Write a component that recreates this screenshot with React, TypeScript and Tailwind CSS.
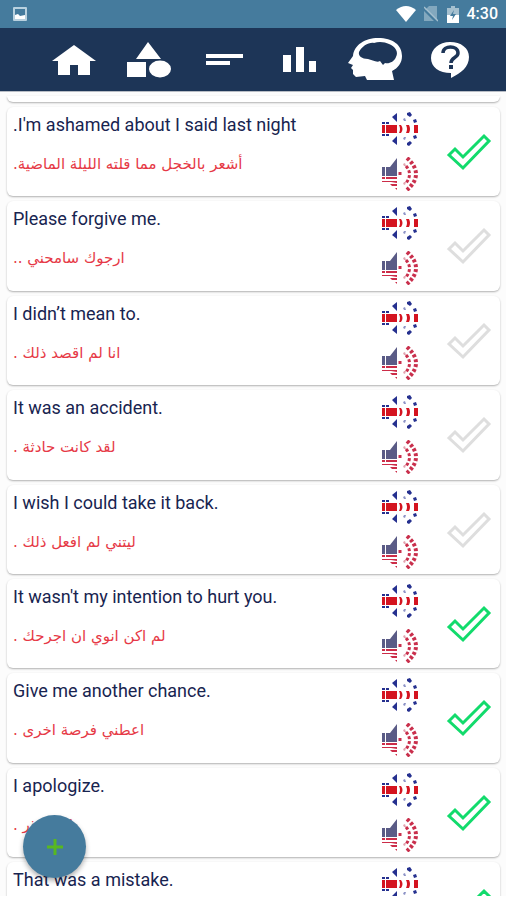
import React from "react";

type Phrase = { en: string; ar: string; done: boolean };

const phrases: Phrase[] = [
  { en: ".I'm ashamed about I said last night", ar: "أشعر بالخجل مما قلته الليلة الماضية.", done: true },
  { en: "Please forgive me.", ar: "ارجوك سامحني ..", done: false },
  { en: "I didn’t mean to.", ar: "انا لم اقصد ذلك .", done: false },
  { en: "It was an accident.", ar: "لقد كانت حادثة .", done: false },
  { en: "I wish I could take it back.", ar: "ليتني لم افعل ذلك .", done: false },
  { en: "It wasn't my intention to hurt you.", ar: "لم اكن انوي ان اجرحك .", done: true },
  { en: "Give me another chance.", ar: "اعطني فرصة اخرى .", done: true },
  { en: "I apologize.", ar: "انا اعتذر .", done: true },
];

function UkSpeaker() {
  return (
    <svg width="36" height="34" viewBox="0 0 36 34" aria-hidden="true">
      <path d="M0 13h3v8H0zM4 13h11v8H4zM17 13h2q3 4 0 8h-2q2-4 0-8zM24 13h3q2 4 0 8h-3q2-4 0-8zM32 13h4v8h-4z" fill="#d41420" />
      <path
        d="M0 10h3v2H0zM4 10h3v2H4zM0 22h3v2H0zM4 22h3v2H4zM10 5l5-4v9zM10 29l5 4v-9zM25 1l3-1 2 3-2 2-3-2zM31 8l3-1 1 3-3 1zM31 24l3-1 1 3-3 1zM25 31l3-2 2 2-3 3-2-1z"
        fill="#25308f"
      />
      <path d="M21 7l2-1 1 3h-2zM22 25h2l-1 3-2-1z" fill="#8d93c6" />
    </svg>
  );
}

function UsSpeaker() {
  return (
    <svg width="36" height="34" viewBox="0 0 36 34" aria-hidden="true">
      <path d="M0 10h3v9H0zM4 10h4l7-9v18H4z" fill="#5a5b86" />
      <path d="M0 20h3v2H0zM4 20h11v2H4zM0 24h15v2l-6-1H0zM8 27h7v2h-5zM13 31h2v2z" fill="#cc2c48" />
      <g fill="none" stroke="#c92f4c" strokeWidth="3" strokeDasharray="3 2">
        <path d="M25 1Q43 17 25 33" strokeWidth="4" />
        <path d="M24 9Q31 17 24 26" />
        <path d="M18 15v5" />
      </g>
      <path d="M21 7l2-1 1 3h-2zM22 25h2l-1 3-2-1z" fill="#e3a3b0" />
    </svg>
  );
}

function CheckIcon({ done }: { done: boolean }) {
  return (
    <svg width="46" height="40" viewBox="0 0 46 40" fill="none" aria-hidden="true">
      <path d="M3 23L9 17L17 25L38 4L43 9L17 36Z" stroke={done ? "#12db6c" : "#dedede"} strokeWidth="3" />
    </svg>
  );
}

function PhraseText({ en, ar }: { en: string; ar?: string }) {
  return (
    <div className="min-w-0 flex-1">
      <p className="text-lg leading-[26px] text-[#182450]">{en}</p>
      {ar && (
        <p dir="rtl" lang="ar" className="mt-3 w-fit text-[15px] leading-7 text-[#e63946] font-['DejaVu_Sans',sans-serif]">
          {ar}
        </p>
      )}
    </div>
  );
}

function PhraseCard({ phrase }: { phrase: Phrase }) {
  return (
    <li className="flex min-h-[94px] flex-1 pt-[5px]">
      <article className="flex flex-1 items-start rounded-md bg-white pt-[5px] pr-2 pl-[6px] shadow-[0_1px_2px_rgba(0,0,0,0.3)]">
        <PhraseText en={phrase.en} ar={phrase.ar} />
        <div className="flex flex-col gap-[11px]">
          <button type="button" aria-label="Play British pronunciation"><UkSpeaker /></button>
          <button type="button" aria-label="Play American pronunciation"><UsSpeaker /></button>
        </div>
        <button type="button" aria-label="Mark as learned" aria-pressed={phrase.done} className="mt-5 ml-7">
          <CheckIcon done={phrase.done} />
        </button>
      </article>
    </li>
  );
}

function StatusBar() {
  return (
    <div className="flex h-7 shrink-0 items-center bg-[#457b9d] pr-2 pl-3 text-white">
      <svg width="16" height="16" viewBox="0 0 16 16" aria-hidden="true">
        <path fillRule="evenodd" d="M2 1h12a1 1 0 011 1v12a1 1 0 01-1 1H2a1 1 0 01-1-1V2a1 1 0 011-1zM3 3v10h10V3z" fill="#b9d1df" />
        <path d="M3 9l3-1 2 2 5-1v4H3z" fill="white" />
      </svg>
      <div className="ml-auto flex items-center">
        <svg width="20" height="16" viewBox="0 0 20 16" aria-hidden="true">
          <path d="M0 4Q10-4 20 4L10 16z" fill="white" />
        </svg>
        <svg className="ml-2" width="14" height="16" viewBox="0 0 14 16" aria-hidden="true">
          <path d="M5 0h8v14L1 2V4L5 0zM0 5l10 10H0z" fill="#83a8be" />
          <path d="M0 1l14 14" stroke="#a5c0cf" strokeWidth="1.500" />
        </svg>
        <svg className="ml-[9px]" width="12" height="17" viewBox="0 0 12 17" aria-hidden="true">
          <path d="M4 0h4v2h4v7H0V2h4z" fill="#a5c0cf" />
          <path d="M0 9h12v8H0z" fill="white" />
          <path d="M7 4L3 10h3l-1 4 4-6H6z" fill="#457b9d" />
        </svg>
        <span className="ml-2 text-base leading-5 font-medium">4:30</span>
      </div>
    </div>
  );
}

function NavButton({ label, children }: { label: string; children: React.ReactNode }) {
  return (
    <button type="button" aria-label={label} className="flex h-full flex-1 items-center justify-center">
      {children}
    </button>
  );
}

function NavBar() {
  return (
    <nav className="flex h-[63px] shrink-0 items-center bg-[#1d3557] pr-[18px] pl-9">
      <NavButton label="Home">
        <svg width="44" height="30" viewBox="0 0 44 30" aria-hidden="true">
          <path d="M22 0L44 16H38V30H26V20H18V30H6V16H0z" fill="white" />
        </svg>
      </NavButton>
      <NavButton label="Categories">
        <svg width="44" height="36" viewBox="0 0 44 36" fill="white" aria-hidden="true">
          <path d="M21 0L34 17H9zM0 20h19v15H0z" />
          <ellipse cx="33" cy="27" rx="11" ry="8.500" />
        </svg>
      </NavButton>
      <NavButton label="Phrases">
        <svg width="37" height="12" viewBox="0 0 37 12" fill="white" aria-hidden="true">
          <path d="M0 0h37v4H0zM0 7h24v4H0z" />
        </svg>
      </NavButton>
      <NavButton label="Statistics">
        <svg width="33" height="26" viewBox="0 0 33 26" fill="white" aria-hidden="true">
          <path d="M0 8h8v17H0zM13 0h8v25h-8zM26 14h7v11h-7z" />
        </svg>
      </NavButton>
      <NavButton label="Train memory">
        <svg width="54" height="43" viewBox="0 0 54 43" aria-hidden="true">
          <path d="M5 18C6 7 17 0 30 0C45 0 54 7 54 18C54 25 50 30 44 33L46 42H19L17 38L8 39L5 36V32L3 30L5 27L0 25z" fill="white" />
          <path d="M11 14C14 8 21 4 26 5C31 3 37 4 41 6C47 8 51 14 48 19C46 24 41 26 37 25L35 27L32 23C29 25 24 22 20 21C14 21 10 18 11 14z" fill="#1d3557" />
        </svg>
      </NavButton>
      <NavButton label="Help">
        <svg width="38" height="36" viewBox="0 0 38 36" aria-hidden="true">
          <path d="M19 0C30 0 38 6 38 15C38 25 30 31 20 36V31C8 31 0 25 0 16C0 7 8 0 19 0z" fill="white" />
          <path d="M12 11C12 3 27 3 27 11C27 16 20 15 20 21" fill="none" stroke="#1d3557" strokeWidth="3.500" />
          <path d="M18 23h4v4h-4z" fill="#1d3557" />
        </svg>
      </NavButton>
    </nav>
  );
}

export default function App() {
  return (
    <div className="relative flex h-screen min-h-[896px] flex-col overflow-hidden bg-white pb-1 font-[Roboto,sans-serif]">
      <StatusBar />
      <NavBar />
      <main className="flex min-h-0 flex-1 flex-col overflow-hidden border-t border-[#b8bdc5] bg-[#fcfcfc] pr-[6px] pl-[7px]">
        <div className="mt-1 h-[6px] shrink-0 rounded-b-md bg-white shadow-[0_1px_2px_rgba(0,0,0,0.3)]" />
        <ul className="flex flex-1 flex-col">
          {phrases.map((phrase) => (
            <PhraseCard key={phrase.en} phrase={phrase} />
          ))}
        </ul>
        <div className="h-[39px] shrink-0 pt-[5px]">
          <article className="flex items-start rounded-t-md bg-white pt-[5px] pr-2 pl-[6px] shadow-[0_1px_2px_rgba(0,0,0,0.3)]">
            <PhraseText en="That was a mistake." />
            <button type="button" aria-label="Play British pronunciation"><UkSpeaker /></button>
            <button type="button" aria-label="Mark as learned" aria-pressed="true" className="mt-5 ml-7">
              <CheckIcon done />
            </button>
          </article>
        </div>
      </main>
      <button
        type="button"
        aria-label="Add phrase"
        className="absolute bottom-[22px] left-[23px] flex size-[63px] items-center justify-center rounded-full bg-[#457b9d] shadow-[0_3px_5px_rgba(0,0,0,0.3)]"
      >
        <svg width="16" height="16" viewBox="0 0 16 16" aria-hidden="true">
          <path d="M8 0v16M0 8h16" stroke="#58b820" strokeWidth="3" />
        </svg>
      </button>
    </div>
  );
}
